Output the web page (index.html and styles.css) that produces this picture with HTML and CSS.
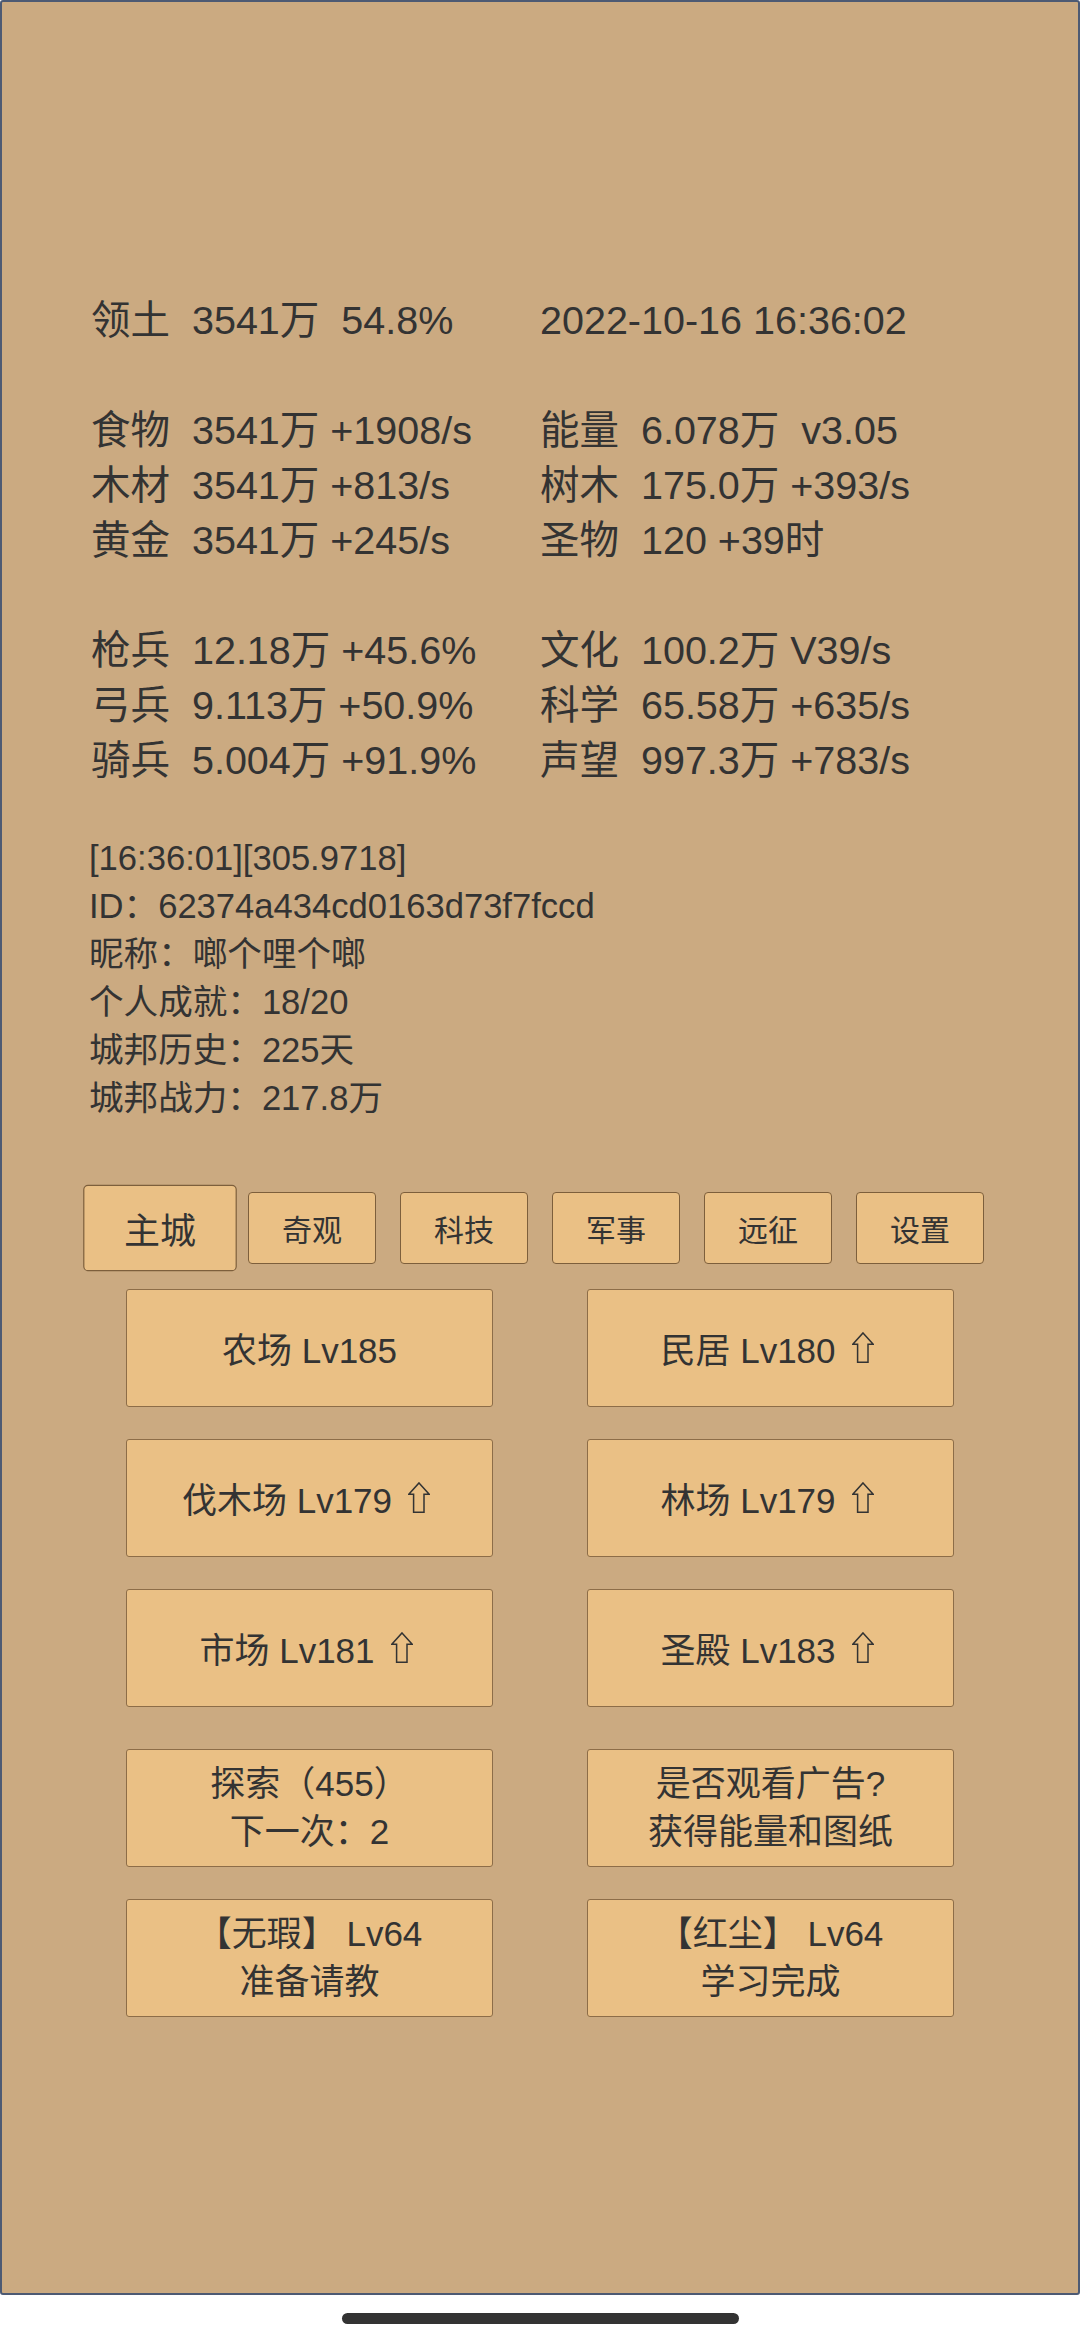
FILE: index.html
```html
<!DOCTYPE html>
<html lang="zh-CN">
<head>
<meta charset="utf-8">
<title>城邦</title>
<link rel="stylesheet" href="styles.css">
</head>
<body>
<div class="panel">
  <div class="stats">
    <div class="stat-group">
      <div>领土  3541万  54.8%</div>
      <div>2022-10-16 16:36:02</div>
    </div>
    <div class="stat-group">
      <div>食物  3541万 +1908/s</div>
      <div>能量  6.078万  v3.05</div>
      <div>木材  3541万 +813/s</div>
      <div>树木  175.0万 +393/s</div>
      <div>黄金  3541万 +245/s</div>
      <div>圣物  120 +39时</div>
    </div>
    <div class="stat-group">
      <div>枪兵  12.18万 +45.6%</div>
      <div>文化  100.2万 V39/s</div>
      <div>弓兵  9.113万 +50.9%</div>
      <div>科学  65.58万 +635/s</div>
      <div>骑兵  5.004万 +91.9%</div>
      <div>声望  997.3万 +783/s</div>
    </div>
  </div>

  <div class="info">
    <div class="info-line">[16:36:01][305.9718]</div>
    <div class="info-line">ID：62374a434cd0163d73f7fccd</div>
    <div class="info-line">昵称：啷个哩个啷</div>
    <div class="info-line">个人成就：18/20</div>
    <div class="info-line">城邦历史：225天</div>
    <div class="info-line">城邦战力：217.8万</div>
  </div>

  <div class="tabs">
    <div class="tab tab-active">主城</div>
    <div class="tab">奇观</div>
    <div class="tab">科技</div>
    <div class="tab">军事</div>
    <div class="tab">远征</div>
    <div class="tab">设置</div>
  </div>

  <div class="grid buildings">
    <div class="btn"><span>农场 Lv185</span></div>
    <div class="btn"><span>民居 Lv180</span><svg class="up" viewBox="0 0 22 31" width="22" height="31"><path d="M11 0.9 L21.2 12.2 L16 12.2 L16 30.2 L5.6 30.2 L5.6 12.2 L0.8 12.2 Z"/></svg></div>
    <div class="btn"><span>伐木场 Lv179</span><svg class="up" viewBox="0 0 22 31" width="22" height="31"><path d="M11 0.9 L21.2 12.2 L16 12.2 L16 30.2 L5.6 30.2 L5.6 12.2 L0.8 12.2 Z"/></svg></div>
    <div class="btn"><span>林场 Lv179</span><svg class="up" viewBox="0 0 22 31" width="22" height="31"><path d="M11 0.9 L21.2 12.2 L16 12.2 L16 30.2 L5.6 30.2 L5.6 12.2 L0.8 12.2 Z"/></svg></div>
    <div class="btn"><span>市场 Lv181</span><svg class="up" viewBox="0 0 22 31" width="22" height="31"><path d="M11 0.9 L21.2 12.2 L16 12.2 L16 30.2 L5.6 30.2 L5.6 12.2 L0.8 12.2 Z"/></svg></div>
    <div class="btn"><span>圣殿 Lv183</span><svg class="up" viewBox="0 0 22 31" width="22" height="31"><path d="M11 0.9 L21.2 12.2 L16 12.2 L16 30.2 L5.6 30.2 L5.6 12.2 L0.8 12.2 Z"/></svg></div>
  </div>

  <div class="grid actions">
    <div class="btn btn-2"><div class="ln">探索（455）</div><div class="ln">下一次：2</div></div>
    <div class="btn btn-2"><div class="ln">是否观看广告?</div><div class="ln">获得能量和图纸</div></div>
    <div class="btn btn-2"><div class="ln">【无瑕】 Lv64</div><div class="ln">准备请教</div></div>
    <div class="btn btn-2"><div class="ln">【红尘】 Lv64</div><div class="ln">学习完成</div></div>
  </div>
</div>
<div class="home"><div class="home-bar"></div></div>
</body>
</html>
```

FILE: styles.css
```css
* {
  box-sizing: border-box;
  margin: 0;
  padding: 0;
}

html,
body {
  width: 1080px;
  height: 2340px;
  background: #ffffff;
}

body {
  font-family: "Liberation Sans", "Noto Sans CJK SC", sans-serif;
  color: #333333;
  overflow: hidden;
}

.panel {
  width: 1080px;
  height: 2295px;
  background: #cbaa81;
  border: 2px solid #4d5a73;
  border-radius: 3px;
  padding-top: 291px;
}

/* resource stats */
.stats {
  padding-left: 89px;
  font-size: 39.5px;
}

.stat-group {
  display: grid;
  grid-template-columns: 449px 1fr;
  grid-auto-rows: 55px;
  line-height: 55px;
  white-space: pre;
}

.stat-group + .stat-group {
  margin-top: 55px;
}

/* player info */
.info {
  margin-top: 46px;
  padding-left: 87px;
  font-size: 34.6px;
  line-height: 48px;
}

.info-line {
  height: 48px;
  white-space: pre;
}

/* tabs */
.tabs {
  margin-top: 70px;
  display: flex;
  justify-content: center;
  gap: 24px;
}

.tab {
  width: 128px;
  height: 72px;
  background: #eac085;
  border: 1.3px solid #7d5f3c;
  border-radius: 4px;
  display: flex;
  align-items: center;
  justify-content: center;
  font-size: 30px;
}

.tab-active {
  transform: scale(1.2);
}

/* buttons grid */
.grid {
  display: grid;
  grid-template-columns: 367px 367px;
  column-gap: 94px;
  row-gap: 32.5px;
  grid-auto-rows: 117.5px;
  justify-content: center;
}

.buildings {
  margin-top: 25px;
}

.actions {
  margin-top: 42.5px;
}

.btn {
  background: #eac085;
  border: 1.3px solid #8d6d48;
  border-radius: 3px;
  display: flex;
  align-items: center;
  justify-content: center;
  font-size: 35px;
  white-space: pre;
}

.btn-2 {
  flex-direction: column;
  text-align: center;
}

.ln {
  height: 48px;
  line-height: 48px;
}

.up {
  margin-left: 16px;
  margin-right: 7px;
  fill: none;
  stroke: #333333;
  stroke-width: 1.5;
  stroke-linejoin: miter;
}

/* gesture bar */
.home {
  height: 45px;
  display: flex;
  justify-content: center;
  padding-top: 18px;
}

.home-bar {
  width: 397px;
  height: 11px;
  border-radius: 6px;
  background: #333333;
}
```
